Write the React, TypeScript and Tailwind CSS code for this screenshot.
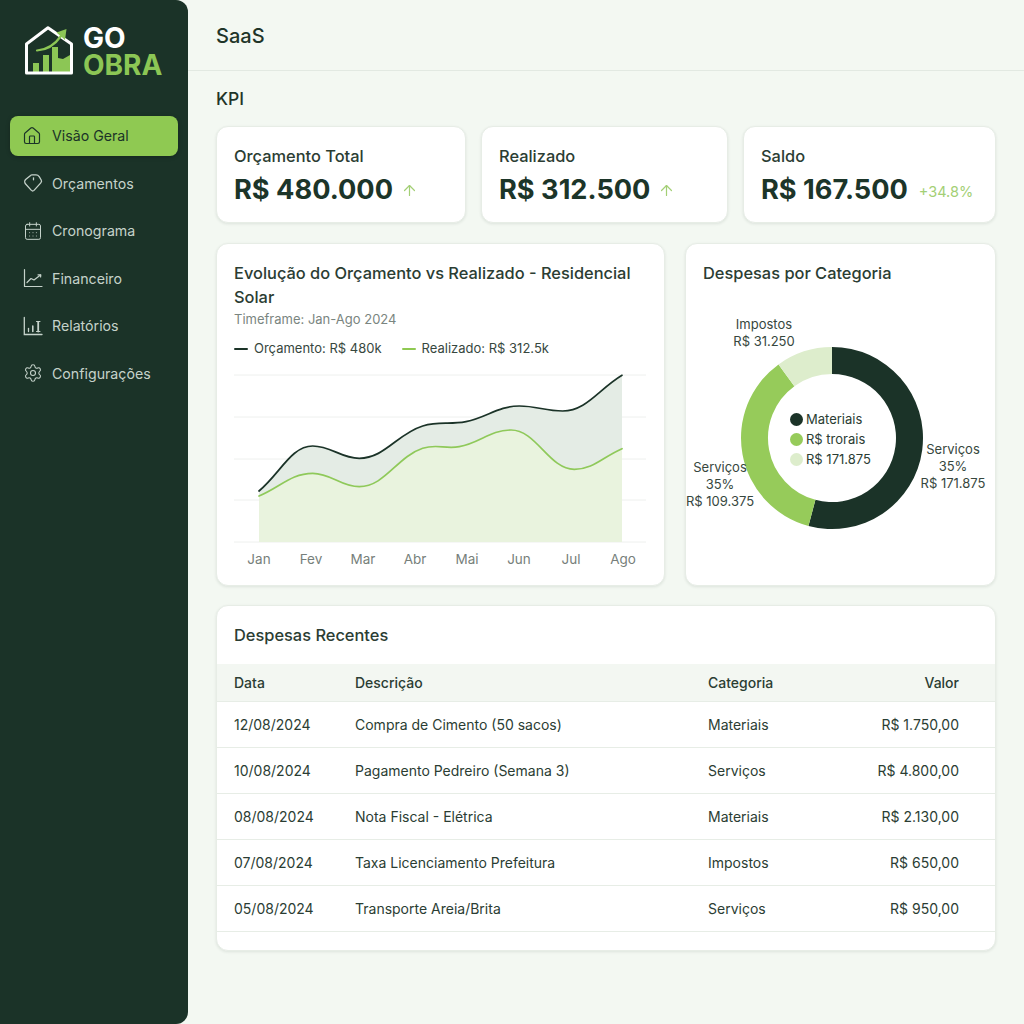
import React from "react";
import { House, CalendarDays, ArrowUp, Settings } from "lucide-react";

type P = [number, number];

function smooth(pts: P[]): string {
  let d = `M${pts[0][0]} ${pts[0][1]}`;
  for (let i = 0; i < pts.length - 1; i++) {
    const p0 = pts[i - 1] || pts[i];
    const p1 = pts[i];
    const p2 = pts[i + 1];
    const p3 = pts[i + 2] || p2;
    const dx = (p2[0] - p1[0]) * 0.4;
    const s1 = i === 0 ? (p2[1] - p1[1]) / (p2[0] - p1[0]) : slope(p0, p1, p2);
    const s2 = i === pts.length - 2 ? (p2[1] - p1[1]) / (p2[0] - p1[0]) : slope(p1, p2, p3);
    d += ` C${p1[0] + dx} ${p1[1] + s1 * dx} ${p2[0] - dx} ${p2[1] - s2 * dx} ${p2[0]} ${p2[1]}`;
  }
  return d;
}
function slope(a: P, b: P, c: P): number {
  const s1 = (b[1] - a[1]) / (b[0] - a[0]);
  const s2 = (c[1] - b[1]) / (c[0] - b[0]);
  if (s1 * s2 <= 0) return 0;
  return (s1 + s2) / 2;
}

const dark: P[] = [[259, 491], [312.7, 446], [359.3, 458.3], [422.7, 426], [466, 421.7], [519.3, 406], [562.7, 411], [622, 375.3]];
const green: P[] = [[259, 496], [312.7, 473.3], [359.3, 486.7], [422.7, 448.3], [459.3, 446.7], [511, 430], [574.3, 469.3], [622, 448.7]];

function polar(r: number, deg: number): P {
  const a = ((deg - 90) * Math.PI) / 180;
  return [100 + r * Math.cos(a), 100 + r * Math.sin(a)];
}
function arc(r1: number, r2: number, a: number, b: number): string {
  const [x1, y1] = polar(r1, a);
  const [x2, y2] = polar(r1, b);
  const [x3, y3] = polar(r2, b);
  const [x4, y4] = polar(r2, a);
  const large = b - a > 180 ? 1 : 0;
  return `M${x1} ${y1} A${r1} ${r1} 0 ${large} 1 ${x2} ${y2} L${x3} ${y3} A${r2} ${r2} 0 ${large} 0 ${x4} ${y4} Z`;
}

function TagIcon() {
  return (
    <svg width="20" height="20" viewBox="0 0 20 20" fill="none" stroke="currentColor" strokeWidth="1.3" strokeLinejoin="round" strokeLinecap="round">
      <path d="M2.6 6.6L7.6 2.4C8 2 8.5 1.9 9 1.9H13C14.5 1.9 15.5 2.6 16.2 3.6L18.2 7C18.8 8 18.6 9 17.8 9.9L11 17.4C10.2 18.2 9.2 18.2 8.4 17.4L2.4 10.8C1.4 9.6 1.5 7.6 2.6 6.6Z" />
      <path d="M10.5 4.8V6.8" />
    </svg>
  );
}
function LineIcon() {
  return (
    <svg width="20" height="20" viewBox="0 0 20 20" fill="none" stroke="currentColor" strokeWidth="1.2" strokeLinecap="round" strokeLinejoin="round">
      <path d="M1.5 1.5V18.5H19" />
      <path d="M4 14.5L8 10.5L11 12L17.5 7" />
      <path d="M15 6.8L17.8 6.8L17.6 9" />
    </svg>
  );
}
function BarsIcon() {
  return (
    <svg width="20" height="20" viewBox="0 0 20 20" fill="none" stroke="currentColor" strokeWidth="1.3" strokeLinecap="round">
      <path d="M1.3 1.5V18.5H19" />
      <path d="M5.5 15.5V12.5" />
      <path d="M9.8 15.5V10" strokeWidth="1.6" />
      <path d="M15.2 15.5V5.8" strokeWidth="1.8" />
      <path d="M13.5 5.5H17M13.5 15.5H17" strokeWidth="1" />
    </svg>
  );
}
function Logo() {
  return (
    <svg width="50" height="50" viewBox="0 0 50 50" fill="none" className="shrink-0">
      <path d="M9 37H15V46H9Z" fill="#8cc655" />
      <path d="M19 29H25V46H19Z" fill="#8cc655" />
      <path d="M28 21H34V32L39 33L46 29V46H28Z" fill="#8cc655" />
      <path d="M2.5 47V18L24 1.8L47.5 18V47Z" stroke="#ffffff" strokeWidth="3" strokeLinejoin="round" />
      <path d="M13 24.5C21 24 30 20 37 10" stroke="#8cc655" strokeWidth="2.2" strokeLinecap="round" />
      <path d="M32.5 6.5L42.5 3L41 14Z" fill="#8cc655" />
    </svg>
  );
}

const nav = [
  { label: "Orçamentos", icon: <TagIcon /> },
  { label: "Cronograma", icon: <CalendarDays size={20} strokeWidth={1.2} /> },
  { label: "Financeiro", icon: <LineIcon /> },
  { label: "Relatórios", icon: <BarsIcon /> },
  { label: "Configurações", icon: <Settings size={20} strokeWidth={1.3} /> },
];

const rows = [
  ["12/08/2024", "Compra de Cimento (50 sacos)", "Materiais", "R$ 1.750,00"],
  ["10/08/2024", "Pagamento Pedreiro (Semana 3)", "Serviços", "R$ 4.800,00"],
  ["08/08/2024", "Nota Fiscal - Elétrica", "Materiais", "R$ 2.130,00"],
  ["07/08/2024", "Taxa Licenciamento Prefeitura", "Impostos", "R$ 650,00"],
  ["05/08/2024", "Transporte Areia/Brita", "Serviços", "R$ 950,00"],
];

const card = "bg-white rounded-xl border border-[#e7ede6] shadow-[0_1px_3px_rgba(30,50,35,0.10)]";

function Kpi({ label, value, extra, className }: { label: string; value: string; extra: React.ReactNode; className: string }) {
  return (
    <div className={`${card} ${className} h-[97px] px-[17px] pt-[17px]`}>
      <div className="text-[16.4px] leading-[24px] text-[#2b3d33] font-[450]">{label}</div>
      <div className="flex items-center mt-[4px]">
        <span className="text-[27.2px] leading-[36px] font-bold text-[#1c3529]">{value}</span>
        {extra}
      </div>
    </div>
  );
}

export default function App() {
  const lineD = smooth(dark);
  const greenD = smooth(green);
  return (
    <div className="flex w-[1024px] h-[1024px] overflow-hidden bg-[#f3f8f2] font-['Inter',sans-serif]">
      <aside className="w-[188px] shrink-0 h-full bg-[#1b3328] rounded-r-xl">
        <div className="flex items-start pl-6 pt-[26px] h-[116px]">
          <Logo />
          <div className="ml-[9px] -mt-[1px] text-[28px] leading-[27px] font-bold">
            <div className="text-white">GO</div>
            <div className="text-[#8cc655]">OBRA</div>
          </div>
        </div>
        <nav className="px-2.5">
          <div className="h-10 rounded-lg bg-[#8fc952] text-[#1b3328] flex items-center pl-[12px] gap-[10px] text-[14.2px] shadow-[0_1px_4px_rgba(0,0,0,0.25)]">
            <House size={20} strokeWidth={1.4} />
            <span>Visão Geral</span>
          </div>
          <div className="mt-[3.5px]">
            {nav.map((n) => (
              <div key={n.label} className="h-[47.5px] flex items-center pl-[13px] gap-[9px] text-[14.2px] text-[#c5d2ca]">
                <span className="w-[20px] flex justify-center shrink-0">{n.icon}</span>
                <span>{n.label}</span>
              </div>
            ))}
          </div>
        </nav>
      </aside>

      <main className="flex-1 min-w-0">
        <header className="h-[71px] border-b border-[#e2e9e2] flex items-center pl-7 pt-px text-[20px] font-medium text-[#1f3529]">SaaS</header>
        <div className="pl-7 pr-7">
          <h2 className="mt-[16px] text-[17.5px] leading-[24px] font-medium text-[#1f3529]">KPI</h2>
          <div className="flex gap-[15px] mt-[15px]">
            <Kpi className="w-[250px]" label="Orçamento Total" value="R$ 480.000" extra={<ArrowUp size={17} strokeWidth={1.7} className="ml-[8px] text-[#a3cf75]" />} />
            <Kpi className="w-[247px]" label="Realizado" value="R$ 312.500" extra={<ArrowUp size={17} strokeWidth={1.7} className="ml-[8px] text-[#a3cf75]" />} />
            <Kpi className="w-[253px]" label="Saldo" value="R$ 167.500" extra={<span className="ml-[11px] mt-[3px] text-[14.5px] text-[#a3cf75]">+34.8%</span>} />
          </div>

          <div className="flex gap-5 mt-5">
            <section className={`${card} w-[449px] h-[343px] px-[17px] pt-[17px]`}>
              <h3 className="text-[16.4px] leading-[24px] font-medium text-[#2b3d33] w-[412px]">Evolução do Orçamento vs Realizado - Residencial Solar</h3>
              <p className="text-[13px] leading-[20px] text-[#7a8580]">Timeframe: Jan-Ago 2024</p>
              <div className="flex items-center text-[13px] text-[#37473e] mt-[10px] h-5">
                <span className="w-[14px] h-[2.5px] bg-[#1b3328] rounded mr-[6px]" />
                <span>Orçamento: R$ 480k</span>
                <span className="w-[14px] h-[2.5px] bg-[#8fc952] rounded ml-5 mr-[6px]" />
                <span>Realizado: R$ 312.5k</span>
              </div>
              <svg width="412" height="174" viewBox="234 372 412 174" className="mt-[13px] block">
                {[375, 417, 459, 500, 542].map((y) => (
                  <line key={y} x1="234" x2="646" y1={y} y2={y} stroke="#eef0ee" strokeWidth="1" />
                ))}
                <path d={`${lineD} L622 542 L259 542Z`} fill="#e4ece5" />
                <path d={`${greenD} L622 542 L259 542Z`} fill="#e9f3de" />
                <path d={lineD} fill="none" stroke="#1b3328" strokeWidth="1.7" strokeLinecap="round" />
                <path d={greenD} fill="none" stroke="#8fc95a" strokeWidth="1.7" strokeLinecap="round" />
              </svg>
              <div className="grid grid-cols-8 w-[416px] -ml-[1px] text-[13.5px] text-[#777f7b] text-center mt-[3px]">
                {["Jan", "Fev", "Mar", "Abr", "Mai", "Jun", "Jul", "Ago"].map((m) => (
                  <span key={m}>{m}</span>
                ))}
              </div>
            </section>

            <section className={`${card} w-[311px] h-[343px] relative px-[17px] pt-[17px]`}>
              <h3 className="text-[16.4px] leading-[24px] font-medium text-[#2b3d33]">Despesas por Categoria</h3>
              <svg width="200" height="200" viewBox="0 0 200 200" className="absolute left-[46px] top-[94px]">
                <path d={arc(91, 64, 0, 195)} fill="#1b3328" />
                <path d={arc(91, 64, 195, 324)} fill="#96cb5a" />
                <path d={arc(91, 64, 324, 360)} fill="#ddedcc" />
              </svg>
              <div className="absolute left-[38px] top-[72px] w-[80px] text-center text-[13px] leading-[17px] text-[#37473e]">Impostos<br />R$ 31.250</div>
              <div className="absolute left-[-6px] top-[215px] w-[80px] text-center text-[13px] leading-[17px] text-[#37473e]">Serviços<br />35%<br />R$ 109.375</div>
              <div className="absolute left-[227px] top-[197px] w-[80px] text-center text-[13px] leading-[17px] text-[#37473e]">Serviços<br />35%<br />R$ 171.875</div>
              <div className="absolute left-[104px] top-[165px] text-[13px] leading-[20px] text-[#2b3d33] flex flex-col">
                <div className="flex items-center gap-[3px]"><span className="size-[13px] rounded-full bg-[#1b3328]" />Materiais</div>
                <div className="flex items-center gap-[3px]"><span className="size-[13px] rounded-full bg-[#96cb5a]" />R$ trorais</div>
                <div className="flex items-center gap-[3px]"><span className="size-[13px] rounded-full bg-[#ddedcc]" />R$ 171.875</div>
              </div>
            </section>
          </div>

          <section className={`${card} mt-[19px] h-[346px] overflow-hidden`}>
            <h3 className="h-[58px] pl-[17px] pt-[17px] text-[16.4px] leading-[24px] font-medium text-[#2b3d33]">Despesas Recentes</h3>
            <div className="grid grid-cols-[121px_353px_1fr_auto] items-center h-[38px] pl-[17px] pr-9 bg-[#f3f7f2] border-b border-[#e7ede6] text-[14px] font-medium text-[#2b3d33]">
              <span>Data</span><span>Descrição</span><span>Categoria</span><span>Valor</span>
            </div>
            {rows.map((r) => (
              <div key={r[0]} className="grid grid-cols-[121px_353px_1fr_auto] items-center h-[46px] pl-[17px] pr-9 border-b border-[#e7ede6] text-[14px] text-[#2b3d33]">
                <span>{r[0]}</span><span>{r[1]}</span><span>{r[2]}</span><span>{r[3]}</span>
              </div>
            ))}
          </section>
        </div>
      </main>
    </div>
  );
}
